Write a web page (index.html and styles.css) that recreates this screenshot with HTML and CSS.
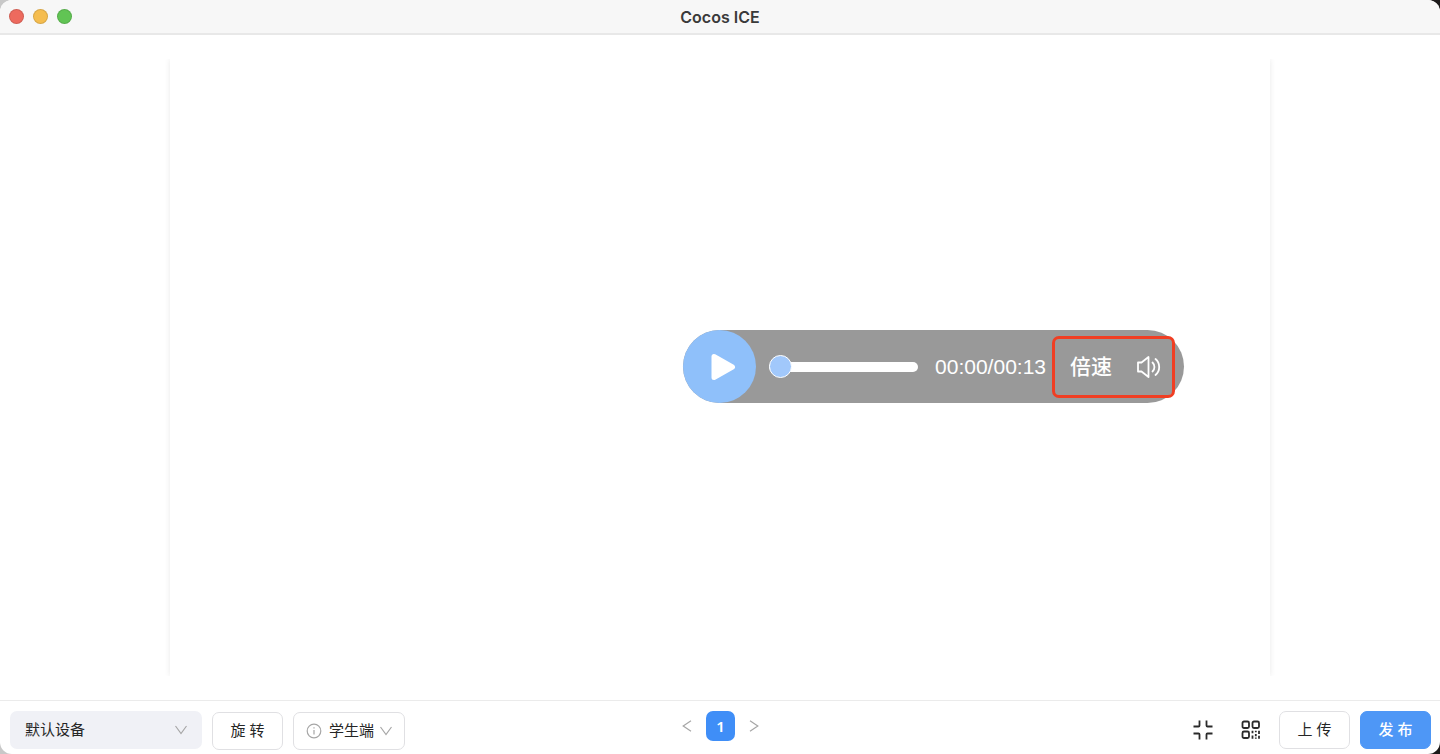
FILE: index.html
```html
<!DOCTYPE html>
<html lang="zh-CN">
<head>
<meta charset="utf-8">
<meta name="viewport" content="width=device-width, initial-scale=1">
<title>Cocos ICE</title>
<link rel="stylesheet" href="styles.css">
</head>
<body>
<div class="window">
  <header class="titlebar">
    <div class="lights">
      <button class="light light-close" type="button" aria-label="关闭"></button>
      <button class="light light-min" type="button" aria-label="最小化"></button>
      <button class="light light-max" type="button" aria-label="最大化"></button>
    </div>
    <h1 class="title">Cocos ICE</h1>
  </header>

  <main class="preview">
    <div class="stage">
      <div class="player">
        <button class="play" type="button" aria-label="播放">
          <svg width="26" height="30" viewBox="0 0 26 30"><path d="M4 4.500v21L22.500 15z" fill="#fff" stroke="#fff" stroke-width="5" stroke-linejoin="round"/></svg>
        </button>
        <input class="progress" type="range" min="0" max="13" value="0" aria-label="播放进度">
        <span class="time">00:00/00:13</span>
        <div class="extras">
          <button class="speed" type="button">倍速</button>
          <button class="volume" type="button" aria-label="音量">
            <svg width="26" height="24" viewBox="0 0 26 24" fill="none" stroke="#fff" stroke-width="1.800" stroke-linejoin="round" stroke-linecap="round"><path d="M2 7.500h3.500L12.500 2v20L5.500 16.500H2z"/><path d="M16.500 7.500a6.200 6.200 0 0 1 0 9M19.500 4a10.500 10.500 0 0 1 0 16"/></svg>
          </button>
        </div>
      </div>
    </div>
  </main>

  <footer class="toolbar">
    <div class="group">
      <div class="picker picker-device">
        <select class="picker-select" aria-label="设备"><option>默认设备</option></select>
        <svg class="chevron" width="12" height="10" viewBox="0 0 12 10"><path d="M.5 1 6 8.500 11.500 1"/></svg>
      </div>
      <button class="btn btn-low" type="button">旋 转</button>
      <div class="picker picker-role btn-low">
        <svg class="info" width="16" height="16" viewBox="0 0 16 16"><circle cx="8" cy="8" r="6.800"/><path d="M8 7v4.500M8 4.200v1.200"/></svg>
        <select class="picker-select" aria-label="角色"><option>学生端</option></select>
        <svg class="chevron" width="12" height="10" viewBox="0 0 12 10"><path d="M.5 1 6 8.500 11.500 1"/></svg>
      </div>
    </div>

    <nav class="pager" aria-label="分页">
      <button class="arrow" type="button" aria-label="上一页"><svg width="10" height="12" viewBox="0 0 10 12"><path d="M9 .8 1.200 6 9 11.200"/></svg></button>
      <button class="page" type="button" aria-current="page">1</button>
      <button class="arrow" type="button" aria-label="下一页"><svg width="10" height="12" viewBox="0 0 10 12"><path d="M1 .8 8.800 6 1 11.200"/></svg></button>
    </nav>

    <div class="group group-end">
      <button class="tool" type="button" aria-label="退出全屏">
        <svg width="20" height="20" viewBox="0 0 20 20"><path d="M.5 6.500h5q1 0 1-1V.5M19.500 6.500h-5q-1 0-1-1V.5M.5 13.500h5q1 0 1 1v5M19.500 13.500h-5q-1 0-1 1v5"/></svg>
      </button>
      <button class="tool" type="button" aria-label="二维码">
        <svg width="20" height="20" viewBox="0 0 20 20"><rect x="1.500" y="1.500" width="6.500" height="6.500" rx="1.500"/><rect x="11.500" y="1.500" width="6.500" height="6.500" rx="1.500"/><rect x="1.500" y="11.500" width="6.500" height="6.500" rx="1.500"/><path d="M11.500 10.800v2.400M11.500 15.500v3.300M14.800 10.800v1.400M14.800 14v2.200M14.800 17.600v1.200M18 10.800v3.200M18 15.800v3"/></svg>
      </button>
      <button class="btn btn-upload" type="button">上 传</button>
      <button class="btn btn-primary" type="button">发 布</button>
    </div>
  </footer>
</div>
</body>
</html>
```
FILE: styles.css
```css
* { box-sizing: border-box; }

body {
  margin: 0;
  background: linear-gradient(90deg, #c8c8c8 50%, #1c1a1a 50%);
  color: #262626;
  font: 15px/20px "Liberation Sans", "Noto Sans CJK SC", sans-serif;
}

button, select {
  margin: 0;
  padding: 0;
  border: 0;
  background: none;
  color: inherit;
  font: inherit;
}

svg { display: block; flex: none; }

.window {
  display: flex;
  flex-direction: column;
  min-height: 100vh;
  overflow: hidden;
  border-radius: 12px;
  background: #fff;
}

.titlebar {
  display: grid;
  grid-template-columns: 1fr auto 1fr;
  align-items: center;
  height: 35px;
  padding: 0 9px;
  border-bottom: 2px solid #e8e8e8;
  background: #f7f7f7;
}

.lights { display: flex; gap: 9px; }

.light {
  width: 15px;
  height: 15px;
  border: 1px solid rgba(0, 0, 0, 0.12);
  border-radius: 50%;
}
.light-close { background: #ed6a5e; }
.light-min { background: #f5bd4f; }
.light-max { background: #61c454; }

.title {
  margin: 0;
  color: #3a3a3a;
  font: 600 16px/20px Inter, sans-serif;
}

.preview {
  display: flex;
  flex: 1;
  padding: 24px 170px;
}

.stage {
  display: flex;
  flex: 1;
  align-items: center;
  justify-content: flex-end;
  padding: 0 86px 2px 0;
  box-shadow: 0 0 6px rgba(0, 0, 0, 0.09);
  clip-path: inset(0 -6px);
}

.player {
  display: flex;
  align-items: center;
  height: 73px;
  padding-right: 9px;
  border-radius: 37px;
  background: #999;
  color: #fff;
  font-size: 21px;
  line-height: 28px;
}

.play {
  display: grid;
  place-items: center;
  width: 73px;
  height: 73px;
  padding-left: 7px;
  border-radius: 50%;
  background: #8fc0fa;
}

.progress {
  width: 149px;
  height: 24px;
  margin: 0 17px 0 13px;
  appearance: none;
  background: none;
}
.progress::-webkit-slider-runnable-track {
  height: 10px;
  border-radius: 5px;
  background: #fff;
}
.progress::-webkit-slider-thumb {
  width: 23px;
  height: 23px;
  margin-top: -7px;
  appearance: none;
  border: 1px solid #fff;
  border-radius: 50%;
  background: #a1c8fb;
}

.speed { font-weight: 500; }

.extras {
  display: flex;
  align-items: center;
  gap: 24px;
  height: 62px;
  margin-left: 6px;
  padding: 0 10px 0 15px;
  border: 3px solid #f03e23;
  border-radius: 7px;
}

.toolbar {
  display: grid;
  grid-template-columns: 1fr auto 1fr;
  align-items: start;
  padding: 10px 9px 4px 10px;
  border-top: 1px solid #ebebeb;
}

.group { display: flex; align-items: flex-start; gap: 10px; }
.group-end { justify-content: flex-end; }

.btn {
  min-width: 71px;
  height: 38px;
  padding: 0 17px;
  border: 1px solid #e0e0e3;
  border-radius: 7px;
  background: #fff;
  white-space: pre;
}
.btn-low { margin-top: 1px; }

.btn-primary {
  border-color: #4e97f6;
  background: #4e97f6;
  color: #fff;
  font-weight: 500;
}

.picker {
  display: flex;
  align-items: center;
  height: 38px;
  border-radius: 7px;
}
.picker-select { appearance: none; }
.picker-device {
  width: 192px;
  padding: 0 15px;
  background: #f0f1f6;
}
.picker-device .picker-select { flex: 1; }
.picker-role {
  gap: 5px;
  padding: 0 12px;
  border: 1px solid #e0e0e3;
}
.info { margin-right: 2px; }

.chevron, .info, .arrow {
  fill: none;
  stroke: #a6a6a6;
  stroke-width: 1.2;
}

.pager { display: flex; align-items: center; gap: 14px; }

.arrow { display: grid; place-items: center; height: 30px; }

.page {
  width: 29px;
  height: 30px;
  border-radius: 7px;
  background: #3f8ef7;
  color: #fff;
  font: 600 15px/20px "Noto Sans", sans-serif;
}

.tool {
  display: grid;
  place-items: center;
  height: 38px;
  margin-right: 18px;
  fill: none;
  stroke: #2b2b2b;
  stroke-width: 1.8;
}
.tool + .btn { margin-left: -10px; }
```
